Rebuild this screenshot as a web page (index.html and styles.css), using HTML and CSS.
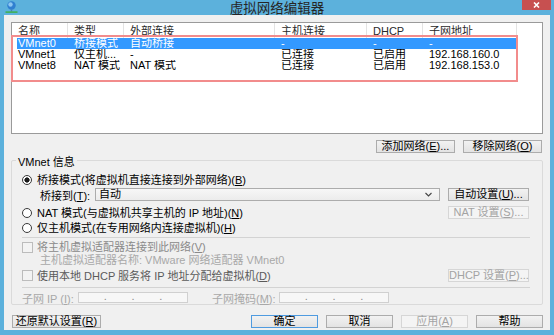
FILE: index.html
```html
<!DOCTYPE html>
<html lang="zh-CN">
<head>
    <meta charset="UTF-8">
    <meta name="viewport" content="width=device-width, initial-scale=1.0">
    <title>虚拟网络编辑器</title>
    <link rel="stylesheet" href="styles.css">
</head>
<body>

<div class="window">

    <!-- Titelleiste -->
    <div class="titlebar">
        <svg class="app-icon" width="13" height="12" viewBox="0 0 13 12">
            <circle cx="6.5" cy="4.5" r="4.2" fill="#2f7fd0"/>
            <circle cx="5.5" cy="3.5" r="2.2" fill="#8cc6f2"/>
            <rect x="5.8" y="8.5" width="1.4" height="2" fill="#4a7fb0"/>
            <rect x="0.5" y="10.4" width="12" height="1.4" fill="#3cb043"/>
        </svg>
        <div class="title">虚拟网络编辑器</div>
        <div class="close">
            <svg width="7" height="6" viewBox="0 0 7 6">
                <path d="M1 0.5 L6 5.5 M6 0.5 L1 5.5" stroke="#fff" stroke-width="1.6"/>
            </svg>
        </div>
    </div>

    <div class="client">

        <!-- Netzwerkliste -->
        <div class="list">
            <div class="cols list-head">
                <span>名称</span><span>类型</span><span>外部连接</span><span>主机连接</span><span>DHCP</span><span>子网地址</span>
            </div>
            <div class="cols row selected">
                <span>VMnet0</span><span>桥接模式</span><span>自动桥接</span><span>-</span><span>-</span><span>-</span>
            </div>
            <div class="cols row">
                <span>VMnet1</span><span>仅主机...</span><span>-</span><span>已连接</span><span>已启用</span><span>192.168.160.0</span>
            </div>
            <div class="cols row">
                <span>VMnet8</span><span>NAT 模式</span><span>NAT 模式</span><span>已连接</span><span>已启用</span><span>192.168.153.0</span>
            </div>
            <div class="mark"></div>
        </div>

        <div class="list-actions">
            <button class="btn">添加网络(<u>E</u>)...</button>
            <button class="btn">移除网络(<u>O</u>)</button>
        </div>

        <!-- VMnet Info -->
        <div class="group">
            <div class="group-title">VMnet 信息</div>

            <div class="opt first"><span class="radio on"></span><span>桥接模式(将虚拟机直接连接到外部网络)(<u>B</u>)</span></div>

            <div class="bridge-row">
                <span class="bridge-label">桥接到(<u>T</u>):</span>
                <div class="combo">
                    <span>自动</span>
                    <svg width="7" height="5" viewBox="0 0 7 5"><path d="M0.5 1 L3.5 4 L6.5 1" fill="none" stroke="#444" stroke-width="1.1"/></svg>
                </div>
                <button class="btn side">自动设置(<u>U</u>)...</button>
            </div>

            <div class="opt-row nat-row">
                <div class="opt"><span class="radio"></span><span>NAT 模式(与虚拟机共享主机的 IP 地址)(<u>N</u>)</span></div>
                <button class="btn side" disabled>NAT 设置(<u>S</u>)...</button>
            </div>

            <div class="opt host-row"><span class="radio"></span><span>仅主机模式(在专用网络内连接虚拟机)(<u>H</u>)</span></div>

            <div class="sep"></div>

            <div class="opt check-row dim"><span class="check"></span><span>将主机虚拟适配器连接到此网络(<u>V</u>)</span></div>
            <div class="adapter muted">主机虚拟适配器名称: VMware 网络适配器 VMnet0</div>

            <div class="opt-row dhcp-row">
                <div class="opt dim-dark"><span class="check"></span><span>使用本地 DHCP 服务将 IP 地址分配给虚拟机(<u>D</u>)</span></div>
                <button class="btn side" disabled>DHCP 设置(<u>P</u>)...</button>
            </div>

            <div class="sep second"></div>

            <div class="ip-row muted">
                <span class="ip-label">子网 IP (<u>I</u>):</span>
                <div class="ip-field"><span>.</span><span>.</span><span>.</span></div>
                <span class="mask-label">子网掩码(<u>M</u>):</span>
                <div class="ip-field"><span>.</span><span>.</span><span>.</span></div>
            </div>
        </div>

        <!-- Fußleiste -->
        <div class="footer">
            <button class="btn reset">还原默认设置(<u>R</u>)</button>
            <div class="footer-right">
                <button class="btn main default">确定</button>
                <button class="btn main">取消</button>
                <button class="btn main" disabled>应用(<u>A</u>)</button>
                <button class="btn main">帮助</button>
            </div>
        </div>

    </div>
</div>

</body>
</html>
```

FILE: styles.css
```css
* {
    box-sizing: border-box;
}

body {
    margin: 0;
    font-family: "Liberation Sans", "Noto Sans CJK SC", sans-serif;
    font-size: 11px;
    color: #000;
}

u {
    text-decoration: underline;
    text-underline-offset: 1px;
}

/* Fensterrahmen */
.window {
    width: 554px;
    height: 335px;
    background-color: #5cb1dc;
    padding: 0 4px 5px 4px;
    display: flex;
    flex-direction: column;
}

.titlebar {
    height: 15px;
    display: grid;
    grid-template-columns: 1fr auto 1fr;
    align-items: start;
}

.app-icon {
    margin: 1px 0 0 1px;
}

.title {
    font-family: "Noto Sans CJK SC", sans-serif;
    font-size: 13.5px;
    line-height: 13px;
    margin-top: 1px;
    color: #262626;
}

.close {
    justify-self: end;
    width: 29px;
    height: 10px;
    margin-right: -1px;
    background-color: #c75050;
    display: flex;
    justify-content: center;
    align-items: center;
}

.client {
    flex: 1;
    background-color: #f0f0f0;
    padding: 7px 7px 0 7px;
    display: flex;
    flex-direction: column;
}

/* Liste */
.list {
    position: relative;
    height: 112px;
    background-color: #fff;
    border: 1px solid #9a9a9a;
    padding-left: 5px;
}

.cols {
    display: grid;
    grid-template-columns: 51px 56px 151px 92px 56px 94px;
    width: 500px;
}

.cols > span {
    padding-left: 6px;
    white-space: nowrap;
    overflow: hidden;
}

.cols > span:first-child {
    padding-left: 1px;
}

.list-head > span {
    height: 15px;
    line-height: 16px;
    color: #2a2a2a;
    border-right: 1px solid #e3e3e3;
}

.row > span {
    height: 11px;
    line-height: 11px;
}

.row.selected {
    background-color: #3399ff;
    color: #fff;
}

.mark {
    position: absolute;
    left: -1px;
    top: 12px;
    width: 507px;
    height: 47px;
    border: 2px solid #f28c8c;
}

.list-actions {
    margin-top: 6px;
    display: flex;
    justify-content: flex-end;
    gap: 8px;
    padding-right: 1px;
}

.list-actions .btn {
    width: 79px;
}

/* Buttons */
.btn {
    height: 13px;
    padding: 0;
    border: 1px solid #acacac;
    background: linear-gradient(#f2f2f2, #e3e3e3);
    font-family: "Liberation Sans", "Noto Sans CJK SC", sans-serif;
    font-size: 11px;
    line-height: 11px;
    color: #000;
    white-space: nowrap;
}

.btn:disabled {
    border-color: #d6d6d6;
    background: #f4f4f4;
    color: #a3a3a3;
}

.btn.default {
    border-color: #4f9be0;
}

/* Gruppe */
.group {
    margin-top: 7px;
    height: 145px;
    border: 1px solid #dadada;
    border-radius: 2px;
    padding: 0 13px 0 10px;
}

.group-title {
    display: inline-block;
    margin: -5px 0 0 -6px;
    padding: 0 2px;
    line-height: 12px;
    background-color: #f0f0f0;
    vertical-align: top;
}

.opt {
    display: flex;
    align-items: center;
    line-height: 12px;
    height: 12px;
    white-space: nowrap;
}

.opt.first {
    margin-top: 1px;
}

.radio {
    width: 10px;
    height: 10px;
    margin-right: 5px;
    border: 1px solid #3a3a3a;
    border-radius: 50%;
    background: #fff;
    flex: none;
}

.radio.on {
    background: radial-gradient(circle, #1a1a1a 0 2.3px, #fff 2.9px);
}

.check {
    width: 11px;
    height: 11px;
    margin-right: 4px;
    border: 1px solid #bcbcbc;
    background: #f3f3f3;
    flex: none;
}

.bridge-row {
    margin-top: 2px;
    padding-left: 18px;
    display: flex;
    align-items: center;
    height: 13px;
}

.bridge-label {
    width: 55px;
    flex: none;
}

.combo {
    width: 345px;
    height: 13px;
    border: 1px solid #acacac;
    background: linear-gradient(#f7f7f7, #ececec);
    display: flex;
    align-items: center;
    justify-content: space-between;
    padding: 0 7px 0 3px;
    line-height: 11px;
}

.side {
    width: 81px;
    margin-left: auto;
}

.opt-row {
    display: flex;
    align-items: center;
    height: 13px;
}

.nat-row {
    margin-top: 5px;
}

.host-row {
    margin-top: 3px;
}

.sep {
    margin-top: 3px;
    height: 1px;
    background-color: #d3d3d3;
    margin-right: -1px;
}

.sep.second {
    margin-top: 5px;
}

.check-row {
    margin-top: 3px;
}

.adapter {
    margin-top: 1px;
    padding-left: 18px;
    line-height: 12px;
    white-space: nowrap;
}

.dhcp-row {
    margin-top: 3px;
}

.dim {
    color: #8a8a8a;
}

.dim-dark {
    color: #5a5a5a;
}

.muted {
    color: #a8a8a8;
}

.ip-row {
    margin-top: 4px;
    display: flex;
    align-items: center;
    height: 11px;
    white-space: nowrap;
}

.ip-label {
    width: 56px;
}

.mask-label {
    width: 67px;
    margin-left: 24px;
}

.ip-field {
    width: 110px;
    height: 11px;
    border: 1px solid #d0d0d0;
    background-color: #f7f7f7;
    display: flex;
    justify-content: space-evenly;
    line-height: 6px;
    color: #8a8a8a;
}

/* Fußleiste */
.footer {
    margin-top: 10px;
    display: flex;
    align-items: center;
    padding-left: 1px;
}

.reset {
    width: 89px;
}

.footer-right {
    margin-left: auto;
    display: flex;
    gap: 8px;
}

.main {
    width: 67px;
}
```
